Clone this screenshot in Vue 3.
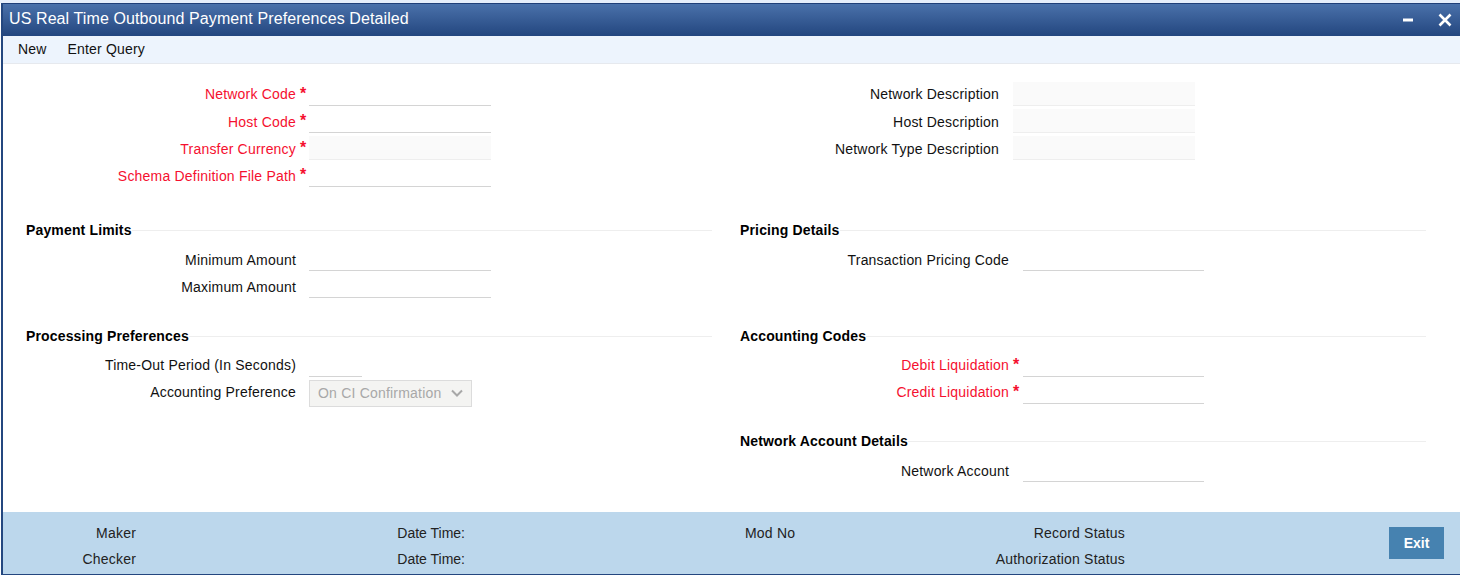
<template>
  <div class="window">
    <div class="title-bar">
      <h1 class="title">US Real Time Outbound Payment Preferences Detailed</h1>
      <div class="win-controls">
        <button class="win-btn btn-min" aria-label="Minimize">
          <svg width="12" height="12" viewBox="0 0 12 12"><path d="M1 6h10" stroke="#fff" stroke-width="3" /></svg>
        </button>
        <button class="win-btn btn-close" aria-label="Close">
          <svg width="14" height="14" viewBox="0 0 14 14"><path d="M1.5 1.5l11 11M12.5 1.5l-11 11" stroke="#fff" stroke-width="2.6" /></svg>
        </button>
      </div>
    </div>

    <div class="menu-bar">
      <a class="menu-item">New</a>
      <a class="menu-item">Enter Query</a>
    </div>

    <div class="form-body">
      <div class="top-block">
        <div class="fields">
          <div v-for="f in mainFields" :key="f.label" class="field">
            <label class="field-label required">{{ f.label }}</label>
            <span class="star">*</span>
            <input class="text-input" :class="{ readonly: f.readonly }" :readonly="f.readonly" type="text" />
          </div>
        </div>
        <div class="fields desc-fields">
          <div v-for="label in descFields" :key="label" class="field">
            <label class="field-label">{{ label }}</label>
            <input class="text-input readonly" readonly type="text" />
          </div>
        </div>
      </div>

      <div class="sections">
        <section class="section">
          <h2 class="section-title"><span>Payment Limits</span></h2>
          <div class="field">
            <label class="field-label">Minimum Amount</label>
            <span class="star"></span>
            <input class="text-input" type="text" />
          </div>
          <div class="field">
            <label class="field-label">Maximum Amount</label>
            <span class="star"></span>
            <input class="text-input" type="text" />
          </div>
        </section>

        <section class="section right">
          <h2 class="section-title"><span>Pricing Details</span></h2>
          <div class="field">
            <label class="field-label">Transaction Pricing Code</label>
            <span class="star"></span>
            <input class="text-input" type="text" />
          </div>
        </section>

        <section class="section tight">
          <h2 class="section-title"><span>Processing Preferences</span></h2>
          <div class="field">
            <label class="field-label">Time-Out Period (In Seconds)</label>
            <span class="star"></span>
            <input class="text-input short" type="text" />
          </div>
          <div class="field">
            <label class="field-label">Accounting Preference</label>
            <span class="star"></span>
            <div class="select-wrap">
              <select class="select-input" disabled>
                <option>On CI Confirmation</option>
              </select>
              <svg class="chevron" width="12" height="8" viewBox="0 0 12 8" fill="none">
                <path d="M1 1.5l5 5 5-5" stroke="#a8a8a8" stroke-width="2" />
              </svg>
            </div>
          </div>
        </section>

        <section class="section right">
          <div class="tight">
            <h2 class="section-title"><span>Accounting Codes</span></h2>
            <div class="field">
              <label class="field-label required">Debit Liquidation</label>
              <span class="star">*</span>
              <input class="text-input" type="text" />
            </div>
            <div class="field">
              <label class="field-label required">Credit Liquidation</label>
              <span class="star">*</span>
              <input class="text-input" type="text" />
            </div>
          </div>

          <h2 class="section-title account-title"><span>Network Account Details</span></h2>
          <div class="field">
            <label class="field-label">Network Account</label>
            <span class="star"></span>
            <input class="text-input" type="text" />
          </div>
        </section>
      </div>
    </div>

    <div class="footer">
      <div class="audit">
        <span class="col-maker">Maker</span>
        <span class="col-date">Date Time:</span>
        <span class="col-mod">Mod No</span>
        <span class="col-status">Record Status</span>
        <span class="col-maker">Checker</span>
        <span class="col-date">Date Time:</span>
        <span class="col-mod"></span>
        <span class="col-status">Authorization Status</span>
      </div>
      <button class="btn-exit">Exit</button>
    </div>
  </div>
</template>

<script setup>
const mainFields = [
  { label: 'Network Code' },
  { label: 'Host Code' },
  { label: 'Transfer Currency', readonly: true },
  { label: 'Schema Definition File Path' }
]

const descFields = ['Network Description', 'Host Description', 'Network Type Description']
</script>

<style>
html,
body {
  height: 100%;
  background: #fff;
}

#app {
  height: 100%;
}
</style>

<style scoped>
.window {
  box-sizing: border-box;
  height: 575px;
  margin-left: 1px;
  border-left: 2px solid #24477f;
  border-bottom: 1px solid #24477f;
  display: flex;
  flex-direction: column;
  font-family: "Liberation Sans", Arial, sans-serif;
  font-size: 14px;
  letter-spacing: 0.18px;
  color: #111;
  background: #fff;
  padding-top: 3px;
}

.window::before {
  content: "";
  height: 3px;
  margin: -3px 0 0 -3px;
  background: #e6eefa;
  flex: none;
}

.title-bar {
  flex: none;
  height: 33px;
  border-top: 1px solid #1f3f78;
  box-sizing: border-box;
  display: flex;
  align-items: center;
  justify-content: space-between;
  background: linear-gradient(#4a71aa, #23467f);
}

.title {
  margin: 0 0 2px 6px;
  font-size: 16px;
  font-weight: 400;
  letter-spacing: 0.1px;
  color: #fff;
}

.win-controls {
  display: flex;
  align-items: center;
  margin-right: 8px;
  gap: 24px;
}

.win-btn {
  display: flex;
  padding: 0;
  border: none;
  background: transparent;
}

.menu-bar {
  flex: none;
  height: 28px;
  box-sizing: border-box;
  display: flex;
  align-items: center;
  gap: 21px;
  padding: 0 0 2px 15px;
  background: #edf4fd;
  border-bottom: 1px solid #e6e9ee;
}

.form-body {
  flex: 1;
  padding: 16px 0 0 23px;
  letter-spacing: 0.2px;
}

.top-block,
.sections {
  display: grid;
  grid-template-columns: 686px 686px;
  column-gap: 28px;
}

.sections {
  margin-top: 32px;
  row-gap: 27px;
}

.field {
  display: flex;
  align-items: flex-end;
  height: 27px;
}

.field-label {
  width: 270px;
  flex: none;
  text-align: right;
  line-height: 27px;
  height: 27px;
  position: relative;
  top: 2px;
}

.top-block .field:first-child .field-label,
.tight .field-label {
  top: 1px;
}

.required {
  color: #f5102f;
}

.star {
  flex: none;
  width: 13px;
  box-sizing: border-box;
  padding-left: 4px;
  height: 27px;
  line-height: 27px;
  color: #f5102f;
  font-size: 16px;
  font-weight: 700;
}

.text-input {
  box-sizing: border-box;
  width: 182px;
  height: 24px;
  margin-bottom: 1px;
  padding: 0 8px;
  border: none;
  border-bottom: 1px solid #d4d4d4;
  background: #fff;
  outline: none;
  font: inherit;
}

.text-input.readonly {
  background: #fafafa;
  border-bottom-color: #eee;
}

.text-input.short {
  width: 53px;
}

.desc-fields .field-label {
  width: 259px;
  margin-right: 14px;
}

.section.right .field-label {
  width: 269px;
}

.section.right .star {
  width: 14px;
}

.section.right .text-input {
  width: 181px;
}

.section-title {
  margin: 0 0 5px;
  height: 20px;
  display: flex;
  align-items: center;
  font-size: 14px;
  font-weight: 700;
  color: #000;
  letter-spacing: 0.15px;
}

.section-title::after {
  content: "";
  flex: 1;
  height: 1px;
  background: #eee;
}

.account-title {
  margin-top: 26px;
}

.select-wrap {
  position: relative;
  width: 163px;
  height: 27px;
  margin-bottom: -2px;
}

.select-input {
  width: 100%;
  height: 100%;
  box-sizing: border-box;
  appearance: none;
  padding: 0 0 2px 8px;
  border: 1px solid #dcdcdc;
  border-radius: 0;
  background: #f4f4f2;
  color: #a8a8a8;
  font: inherit;
  letter-spacing: inherit;
  opacity: 1;
}

.chevron {
  position: absolute;
  right: 9px;
  top: 9px;
}

.footer {
  flex: none;
  height: 62px;
  display: flex;
  align-items: center;
  justify-content: space-between;
  padding-right: 16px;
  background: #bcd7ec;
}

.audit {
  display: grid;
  grid-template-columns: 133px 329px 331px 329px;
  grid-auto-rows: 26px;
  align-items: center;
  color: #222;
  letter-spacing: 0.2px;
  margin-top: 6px;
}

.col-maker,
.col-date,
.col-status {
  text-align: right;
}

.col-date {
  letter-spacing: 0;
}

.col-mod {
  padding-left: 280px;
}

.btn-exit {
  width: 55px;
  height: 32px;
  padding: 0;
  border: none;
  background: #4682b0;
  color: #fff;
  font-family: inherit;
  font-size: 14px;
  font-weight: 700;
}
</style>
